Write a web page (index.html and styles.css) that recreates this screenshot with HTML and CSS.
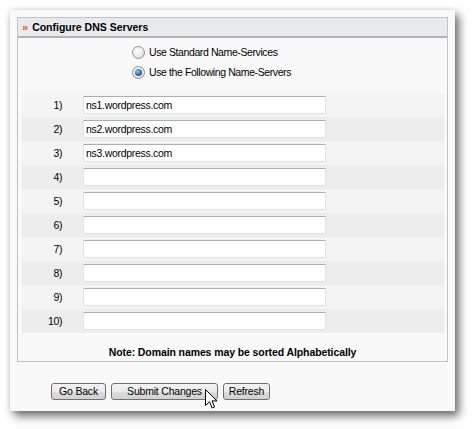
FILE: index.html
```html
<!DOCTYPE html>
<html>
<head>
<meta charset="utf-8">
<link rel="stylesheet" href="styles.css">
</head>
<body>
<div class="window">
  <div class="box">
    <div class="head"><span class="raquo">&raquo;</span><span class="title">Configure DNS Servers</span></div>
    <div class="radios">
      <label class="radio-row"><input type="radio" name="mode" class="radio"><span>Use Standard Name-Services</span></label>
      <label class="radio-row"><input type="radio" name="mode" class="radio" checked><span>Use the Following Name-Servers</span></label>
    </div>
    <div class="rows">
      <div class="row odd"><span class="num">1)</span><input class="field" type="text" value="ns1.wordpress.com"></div>
      <div class="row even"><span class="num">2)</span><input class="field" type="text" value="ns2.wordpress.com"></div>
      <div class="row odd"><span class="num">3)</span><input class="field" type="text" value="ns3.wordpress.com"></div>
      <div class="row even"><span class="num">4)</span><input class="field" type="text" value=""></div>
      <div class="row odd"><span class="num">5)</span><input class="field" type="text" value=""></div>
      <div class="row even"><span class="num">6)</span><input class="field" type="text" value=""></div>
      <div class="row odd"><span class="num">7)</span><input class="field" type="text" value=""></div>
      <div class="row even"><span class="num">8)</span><input class="field" type="text" value=""></div>
      <div class="row odd"><span class="num">9)</span><input class="field" type="text" value=""></div>
      <div class="row even"><span class="num">10)</span><input class="field" type="text" value=""></div>
    </div>
    <div class="note">Note: Domain names may be sorted Alphabetically</div>
  </div>
  <div class="buttons">
    <button class="btn btn-back">Go Back</button>
    <button class="btn btn-submit">Submit Changes</button>
    <button class="btn btn-refresh">Refresh</button>
  </div>
</div>
<svg class="cursor" width="13" height="20" viewBox="0 0 13 20">
  <path d="M0.5 0.5 L0.5 16.5 L4.5 12.8 L7.2 19 L9.6 18 L7 11.9 L12 11.9 Z" fill="#fff" stroke="#000" stroke-width="1" stroke-linejoin="miter"/>
</svg>
</body>
</html>
```
FILE: styles.css
```css
html, body {
  margin: 0;
  padding: 0;
  background: #ffffff;
}
body {
  font-family: "Liberation Sans", Arial, sans-serif;
  font-size: 10.5px;
  letter-spacing: -0.4px;
  color: #000;
  position: relative;
  width: 473px;
  height: 429px;
  overflow: hidden;
}
.window {
  margin: 10px 0 0 10px;
  width: 445px;
  height: 401px;
  box-sizing: border-box;
  padding: 7px 0 0 7px;
  background: #f9f9f9;
  box-shadow: 4px 5px 9px rgba(0, 0, 0, 0.58), 0 0 5px rgba(0, 0, 0, 0.12);
}
.box {
  width: 431px;
  box-sizing: border-box;
  border: 1px solid #c3c3c3;
}
.head {
  height: 18px;
  background: #e8ebed;
  border-bottom: 2px solid #b3b3b3;
  display: flex;
  align-items: center;
  padding-left: 4px;
}
.raquo {
  color: #e2542c;
  font-weight: bold;
  font-size: 11px;
  margin-right: 4px;
  line-height: 1;
  letter-spacing: 0;
}
.title {
  font-weight: bold;
  font-size: 10.5px;
  letter-spacing: 0;
}
.radios {
  margin-top: 4px;
  padding-left: 114px;
  display: flex;
  flex-direction: column;
}
.radio-row {
  height: 20px;
  display: flex;
  align-items: center;
  gap: 4px;
}
.radio {
  -webkit-appearance: none;
  appearance: none;
  margin: 0;
  width: 13px;
  height: 13px;
  border-radius: 50%;
  border: 1px solid #8f8f8f;
  background: radial-gradient(circle at 40% 35%, #ffffff 0%, #e6e6e6 60%, #cfcfcf 100%);
  box-sizing: border-box;
  position: relative;
}
.radio:checked::after {
  content: "";
  position: absolute;
  left: 2px;
  top: 2px;
  width: 7px;
  height: 7px;
  border-radius: 50%;
  background: radial-gradient(circle at 40% 35%, #8fc3ea 0%, #2e6ea6 55%, #1c4470 100%);
}
.rows {
  margin: 11px 3px 0 4px;
  display: flex;
  flex-direction: column;
}
.row {
  height: 24px;
  display: flex;
  align-items: center;
}
.row.odd {
  background: #f4f4f4;
}
.row.even {
  background: #ededed;
}
.num {
  width: 40px;
  text-align: right;
  margin-right: 21px;
}
.field {
  width: 243px;
  height: 18px;
  box-sizing: border-box;
  margin: 0;
  padding: 0 0 0 2px;
  border: 1px solid #dde3ea;
  border-top-color: #abadb3;
  border-left-color: #e2e3ea;
  background: #fff;
  font-family: "Liberation Sans", Arial, sans-serif;
  font-size: 10.5px;
  letter-spacing: -0.3px;
  color: #000;
  outline: none;
}
.note {
  margin-top: 12px;
  height: 14px;
  line-height: 14px;
  padding-bottom: 2px;
  text-align: center;
  font-weight: bold;
  font-size: 10.5px;
  letter-spacing: -0.1px;
}
.buttons {
  margin: 21px 0 0 34px;
  display: flex;
  gap: 5px;
}
.btn {
  height: 17px;
  box-sizing: border-box;
  margin: 0;
  padding: 0;
  border: 1px solid #707070;
  border-radius: 3px;
  background: linear-gradient(#f3f3f3 0%, #ebebeb 50%, #dddddd 51%, #d2d2d2 100%);
  font-family: "Liberation Sans", Arial, sans-serif;
  font-size: 10.5px;
  letter-spacing: -0.2px;
  color: #000;
  line-height: 15px;
}
.btn-back { width: 55px; }
.btn-submit { width: 107px; }
.btn-refresh { width: 47px; }
.cursor {
  position: absolute;
  left: 205px;
  top: 389px;
}
```
